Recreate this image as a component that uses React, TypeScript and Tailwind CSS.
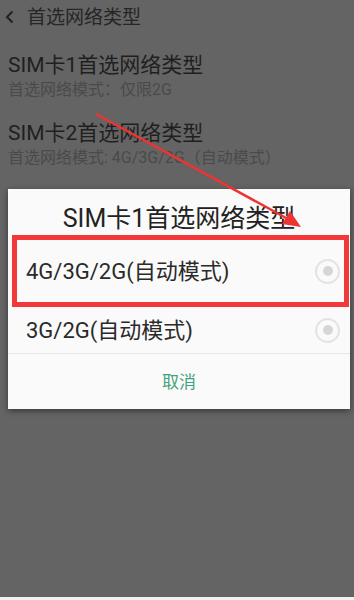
import React from "react";

const font = { fontFamily: 'Roboto, "Noto Sans CJK SC", sans-serif' };

function Radio() {
  return (
    <span className="flex size-[25px] shrink-0 items-center justify-center rounded-full border-2 border-[#e3e3e3]">
      <span className="size-[10px] rounded-full bg-[#d6d6d6]" />
    </span>
  );
}

export default function App() {
  return (
    <div className="relative h-[600px] w-[354px] overflow-hidden bg-[#646464]" style={font}>
      <div className="flex h-[34px] items-center gap-[13px] pl-[5px]">
        <svg width="9" height="14" viewBox="0 0 9 14">
          <polyline points="7.5,1.5 2,7 7.5,12.5" fill="none" stroke="#222" strokeWidth="2" />
        </svg>
        <span className="text-[19px] leading-none text-[#262626]">首选网络类型</span>
      </div>

      <div className="px-2 pt-[17px]">
        <p className="text-[21px] leading-[28px] text-[#1f1f1f]">SIM卡1首选网络类型</p>
        <p className="mt-[1px] text-[16px] leading-[20px] text-[#4a4a4a]">首选网络模式：仅限2G</p>
        <p className="mt-[19px] text-[21px] leading-[28px] text-[#1f1f1f]">SIM卡2首选网络类型</p>
        <p className="mt-[1px] text-[16px] leading-[20px] text-[#4a4a4a]">首选网络模式: 4G/3G/2G（自动模式）</p>
      </div>

      <div className="absolute left-[8px] top-[189px] w-[342px] bg-[#fafafa] shadow-[0_2px_6px_rgba(0,0,0,0.45)]">
        <p className="pt-[15px] text-center text-[25px] leading-[30px] text-[#222]">SIM卡1首选网络类型</p>
        <div className="ml-[4px] mr-[1px] mt-[1px] flex h-[72px] items-center justify-between border-[5px] border-[#f23838] pl-[9px] pr-[4px]">
          <span className="text-[22px] text-[#2a2a2a]">4G/3G/2G(自动模式)</span>
          <Radio />
        </div>
        <div className="flex h-[46px] items-center justify-between pl-[18px] pr-[10px]">
          <span className="text-[22px] text-[#2a2a2a]">3G/2G(自动模式)</span>
          <Radio />
        </div>
        <div className="border-t border-[#e8e8e8]" />
        <div className="flex h-[55px] items-center justify-center pt-[2px] text-[17px] text-[#3fa37c]">取消</div>
      </div>

      <svg className="pointer-events-none absolute left-0 top-0" width="354" height="600" viewBox="0 0 354 600">
        <line x1="96" y1="114" x2="288" y2="219" stroke="#ee3333" strokeWidth="2.5" />
        <polygon points="301,227 282,224 290,211" fill="#ee3333" />
      </svg>

      <div className="absolute bottom-0 left-0 h-[3px] w-full bg-[#f2f2f2]" />
    </div>
  );
}
